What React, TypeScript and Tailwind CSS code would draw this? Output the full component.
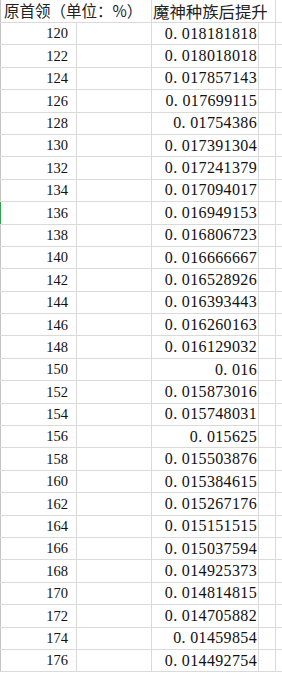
const rows: [number, string][] = [
  [120, "0.018181818"],
  [122, "0.018018018"],
  [124, "0.017857143"],
  [126, "0.017699115"],
  [128, "0.01754386"],
  [130, "0.017391304"],
  [132, "0.017241379"],
  [134, "0.017094017"],
  [136, "0.016949153"],
  [138, "0.016806723"],
  [140, "0.016666667"],
  [142, "0.016528926"],
  [144, "0.016393443"],
  [146, "0.016260163"],
  [148, "0.016129032"],
  [150, "0.016"],
  [152, "0.015873016"],
  [154, "0.015748031"],
  [156, "0.015625"],
  [158, "0.015503876"],
  [160, "0.015384615"],
  [162, "0.015267176"],
  [164, "0.015151515"],
  [166, "0.015037594"],
  [168, "0.014925373"],
  [170, "0.014814815"],
  [172, "0.014705882"],
  [174, "0.01459854"],
  [176, "0.014492754"],
];

export default function App() {
  return (
    <div className="w-[282px] h-[673px] overflow-hidden bg-white text-[#111]">
      {/* header */}
      <div className="flex h-[23px] border-b border-[#dadada]">
        <div className="w-[1px] bg-[#c4c4c4]" />
        <div className="w-[151px] shrink-0 border-r border-[#dadada] pl-[3px] flex items-center whitespace-nowrap text-[15.5px] leading-none text-[#222] [font-family:'Noto_Sans_CJK_SC','Liberation_Serif',serif]">
          原首领（单位：%）
        </div>
        <div className="w-[124px] shrink-0 border-r border-[#dadada] pl-[1px] flex items-center whitespace-nowrap text-[16.4px] leading-none text-[#222] [font-family:'Noto_Sans_CJK_SC','Liberation_Serif',serif]">
          魔神种族后提升
        </div>
        <div className="flex-1" />
      </div>

      {rows.map(([n, v]) => (
        <div key={n} className="flex h-[22.4px] border-b border-[#dadada]">
          <div className={n === 136 ? "w-[1px] bg-[#2fa24a]" : "w-[1px] bg-[#c4c4c4]"} />
          <div className="w-[76px] shrink-0 border-r border-[#dadada] pr-[8px] flex items-center justify-end text-[14.5px] leading-none [font-family:'Liberation_Serif',serif]">
            {n}
          </div>
          <div className="w-[75px] shrink-0 border-r border-[#dadada]" />
          <div className="w-[107px] shrink-0 border-r border-[#dadada] pr-[1px] flex items-center justify-end whitespace-nowrap text-[16px] tracking-[0.35px] leading-none [font-family:'Liberation_Serif',serif]">
            {v.replace(".", ". ")}
          </div>
          <div className="w-[17px] shrink-0 border-r border-[#dadada]" />
          <div className="flex-1" />
        </div>
      ))}
    </div>
  );
}
